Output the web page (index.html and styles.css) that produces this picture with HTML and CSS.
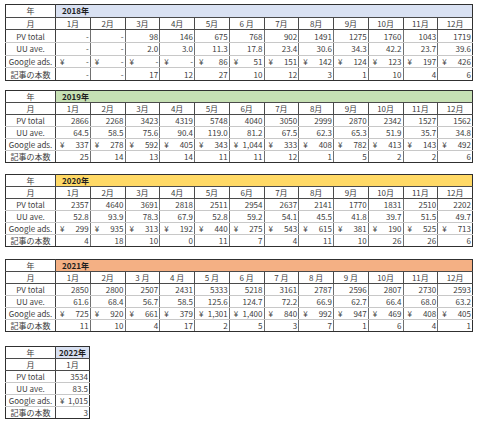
FILE: index.html
```html
<!DOCTYPE html>
<html lang="ja">
<head>
<meta charset="utf-8">
<title>ブログ月次データ</title>
<link rel="stylesheet" href="styles.css">
</head>
<body>
<div class="sheet">

<table class="year year-tall">
<colgroup><col class="c-label"><col span="12"></colgroup>
<tr class="head"><td class="label">年</td><td class="yearcell y2018" colspan="12">2018年</td></tr>
<tr class="head"><td class="label">月</td><td>1月</td><td>2月</td><td>3月</td><td>4月</td><td>5月</td><td>6 月</td><td>7月</td><td>8月</td><td>9月</td><td>10月</td><td>11月</td><td>12月</td></tr>
<tr><td class="label">PV total</td><td>-</td><td>-</td><td>98</td><td>146</td><td>675</td><td>768</td><td>902</td><td>1491</td><td>1275</td><td>1760</td><td>1043</td><td>1719</td></tr>
<tr><td class="label">UU ave.</td><td>-</td><td>-</td><td>2.0</td><td>3.0</td><td>11.3</td><td>17.8</td><td>23.4</td><td>30.6</td><td>34.3</td><td>42.2</td><td>23.7</td><td>39.6</td></tr>
<tr><td class="label">Google ads.</td><td><span class="yen">¥</span>-</td><td><span class="yen">¥</span>-</td><td><span class="yen">¥</span>-</td><td><span class="yen">¥</span>-</td><td><span class="yen">¥</span>86</td><td><span class="yen">¥</span>51</td><td><span class="yen">¥</span>151</td><td><span class="yen">¥</span>142</td><td><span class="yen">¥</span>124</td><td><span class="yen">¥</span>123</td><td><span class="yen">¥</span>197</td><td><span class="yen">¥</span>426</td></tr>
<tr><td class="label">記事の本数</td><td>-</td><td>-</td><td>17</td><td>12</td><td>27</td><td>10</td><td>12</td><td>3</td><td>1</td><td>10</td><td>4</td><td>6</td></tr>
</table>

<table class="year gap-9">
<colgroup><col class="c-label"><col span="12"></colgroup>
<tr class="head"><td class="label">年</td><td class="yearcell y2019" colspan="12">2019年</td></tr>
<tr class="head"><td class="label">月</td><td>1月</td><td>2月</td><td>3月</td><td>4月</td><td>5月</td><td>6月</td><td>7月</td><td>8月</td><td>9月</td><td>10月</td><td>11月</td><td>12月</td></tr>
<tr><td class="label">PV total</td><td>2866</td><td>2268</td><td>3423</td><td>4319</td><td>5748</td><td>4040</td><td>3050</td><td>2999</td><td>2870</td><td>2342</td><td>1527</td><td>1562</td></tr>
<tr><td class="label">UU ave.</td><td>64.5</td><td>58.5</td><td>75.6</td><td>90.4</td><td>119.0</td><td>81.2</td><td>67.5</td><td>62.3</td><td>65.3</td><td>51.9</td><td>35.7</td><td>34.8</td></tr>
<tr><td class="label">Google ads.</td><td><span class="yen">¥</span>337</td><td><span class="yen">¥</span>278</td><td><span class="yen">¥</span>592</td><td><span class="yen">¥</span>405</td><td><span class="yen">¥</span>343</td><td><span class="yen">¥</span>1,044</td><td><span class="yen">¥</span>333</td><td><span class="yen">¥</span>408</td><td><span class="yen">¥</span>782</td><td><span class="yen">¥</span>413</td><td><span class="yen">¥</span>143</td><td><span class="yen">¥</span>492</td></tr>
<tr><td class="label">記事の本数</td><td>25</td><td>14</td><td>13</td><td>14</td><td>11</td><td>11</td><td>12</td><td>1</td><td>5</td><td>2</td><td>2</td><td>6</td></tr>
</table>

<table class="year gap-11">
<colgroup><col class="c-label"><col span="12"></colgroup>
<tr class="head"><td class="label">年</td><td class="yearcell y2020" colspan="12">2020年</td></tr>
<tr class="head"><td class="label">月</td><td>1月</td><td>2月</td><td>3月</td><td>4月</td><td>5月</td><td>6月</td><td>7月</td><td>8月</td><td>9月</td><td>10月</td><td>11月</td><td>12月</td></tr>
<tr><td class="label">PV total</td><td>2357</td><td>4640</td><td>3691</td><td>2818</td><td>2511</td><td>2954</td><td>2637</td><td>2141</td><td>1770</td><td>1831</td><td>2510</td><td>2202</td></tr>
<tr><td class="label">UU ave.</td><td>52.8</td><td>93.9</td><td>78.3</td><td>67.9</td><td>52.8</td><td>59.2</td><td>54.1</td><td>45.5</td><td>41.8</td><td>39.7</td><td>51.5</td><td>49.7</td></tr>
<tr><td class="label">Google ads.</td><td><span class="yen">¥</span>299</td><td><span class="yen">¥</span>935</td><td><span class="yen">¥</span>313</td><td><span class="yen">¥</span>192</td><td><span class="yen">¥</span>440</td><td><span class="yen">¥</span>275</td><td><span class="yen">¥</span>543</td><td><span class="yen">¥</span>615</td><td><span class="yen">¥</span>381</td><td><span class="yen">¥</span>190</td><td><span class="yen">¥</span>525</td><td><span class="yen">¥</span>713</td></tr>
<tr><td class="label">記事の本数</td><td>4</td><td>18</td><td>10</td><td>0</td><td>11</td><td>7</td><td>4</td><td>11</td><td>10</td><td>26</td><td>26</td><td>6</td></tr>
</table>

<table class="year gap-12">
<colgroup><col class="c-label"><col span="12"></colgroup>
<tr class="head"><td class="label">年</td><td class="yearcell y2021" colspan="12">2021年</td></tr>
<tr class="head"><td class="label">月</td><td>1月</td><td>2月</td><td>3 月</td><td>4 月</td><td>5 月</td><td>6 月</td><td>7 月</td><td>8 月</td><td>9 月</td><td>10月</td><td>11月</td><td>12月</td></tr>
<tr><td class="label">PV total</td><td>2850</td><td>2800</td><td>2507</td><td>2431</td><td>5333</td><td>5218</td><td>3161</td><td>2787</td><td>2596</td><td>2807</td><td>2730</td><td>2593</td></tr>
<tr><td class="label">UU ave.</td><td>61.6</td><td>68.4</td><td>56.7</td><td>58.5</td><td>125.6</td><td>124.7</td><td>72.2</td><td>66.9</td><td>62.7</td><td>66.4</td><td>68.0</td><td>63.2</td></tr>
<tr><td class="label">Google ads.</td><td><span class="yen">¥</span>725</td><td><span class="yen">¥</span>920</td><td><span class="yen">¥</span>661</td><td><span class="yen">¥</span>379</td><td><span class="yen">¥</span>1,301</td><td><span class="yen">¥</span>1,400</td><td><span class="yen">¥</span>840</td><td><span class="yen">¥</span>992</td><td><span class="yen">¥</span>947</td><td><span class="yen">¥</span>469</td><td><span class="yen">¥</span>408</td><td><span class="yen">¥</span>405</td></tr>
<tr><td class="label">記事の本数</td><td>11</td><td>10</td><td>4</td><td>17</td><td>2</td><td>5</td><td>3</td><td>7</td><td>1</td><td>6</td><td>4</td><td>1</td></tr>
</table>

<table class="year year-single gap-15">
<colgroup><col class="c-label"><col></colgroup>
<tr class="head"><td class="label">年</td><td class="yearcell y2022">2022年</td></tr>
<tr class="head"><td class="label">月</td><td>1月</td></tr>
<tr><td class="label">PV total</td><td>3534</td></tr>
<tr><td class="label">UU ave.</td><td>83.5</td></tr>
<tr><td class="label">Google ads.</td><td><span class="yen">¥</span>1,015</td></tr>
<tr><td class="label">記事の本数</td><td>3</td></tr>
</table>

</div>
</body>
</html>
```
FILE: styles.css
```css
html, body {
  margin: 0;
  background: #ffffff;
}

body {
  padding: 4px 5px;
  font-family: "Noto Sans CJK JP", "Liberation Sans", sans-serif;
  font-size: 8px;
  color: #404040;
}

.sheet {
  display: flex;
  flex-direction: column;
  align-items: flex-start;
}

.year {
  border-collapse: collapse;
  table-layout: fixed;
  width: 468px;
}

.year-single {
  width: 85px;
}

.gap-9 { margin-top: 9px; }
.gap-11 { margin-top: 11px; }
.gap-12 { margin-top: 12px; }
.gap-15 { margin-top: 14px; }

.c-label {
  width: 50px;
}

.year td {
  height: 11px;
  line-height: 11px;
  padding: 0 1px 0 1px;
  border: 1px solid #c8c8c8;
  border-left-color: #707070;
  border-right-color: #707070;
  text-align: right;
  white-space: nowrap;
  overflow: hidden;
  vertical-align: middle;
}

.year-tall td {
  height: 11.67px;
}

.year .head td {
  border-color: #4a4a4a;
  text-align: center;
}

.year .head:first-child td {
  border-top-color: #303030;
}

.year tr:last-child td {
  border-bottom-color: #303030;
}

.year td:last-child {
  border-right-color: #303030;
}

.year td.label {
  text-align: center;
  border-left-color: #303030;
  border-right-color: #404040;
}

.year td.yearcell {
  text-align: left;
  padding-left: 6px;
  font-weight: bold;
  color: #1e1e1e;
}

.year-single td.yearcell {
  text-align: center;
  padding-left: 1px;
}

.y2018 { background: #d9e1f2; }
.y2019 { background: #c6e0b4; }
.y2020 { background: #ffd966; }
.y2021 { background: #f4b084; }
.y2022 { background: #d9e1f2; }

.yen {
  float: left;
  padding-left: 3px;
}
```
